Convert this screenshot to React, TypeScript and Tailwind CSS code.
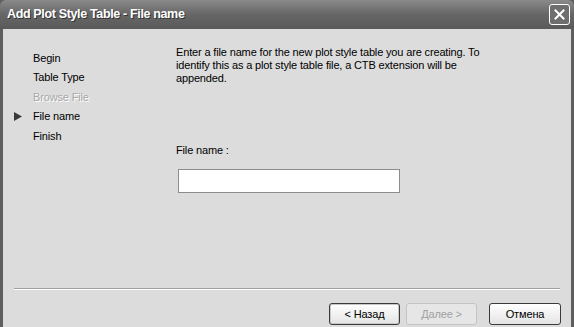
import React from "react";

export default function App() {
  const font = { fontFamily: '"Liberation Sans", Arial, sans-serif' };
  return (
    <div className="w-[574px] h-[327px] bg-[#5e5e5e] flex flex-col overflow-hidden" style={font}>
      {/* Title bar */}
      <div className="h-[29px] shrink-0 flex items-center justify-between pl-[7px] pr-[4px] bg-gradient-to-b from-[#8a8a8a] via-[#666666] to-[#5a5a5a] rounded-t-[6px]">
        <span className="text-white font-bold text-[12.5px] tracking-[-0.35px] [text-shadow:1px_1px_0_#333]">
          Add Plot Style Table - File name
        </span>
        <div className="w-[21px] h-[21px] border border-white rounded-[3px] bg-[#6e6e6e] flex items-center justify-center">
          <svg width="11" height="11" viewBox="0 0 11 11">
            <path d="M1.5 1.5 L9.5 9.5 M9.5 1.5 L1.5 9.5" stroke="white" strokeWidth="2" strokeLinecap="square" />
          </svg>
        </div>
      </div>
      {/* Body */}
      <div className="flex-1 mx-[3px] bg-[#dcdcdc] flex flex-col text-[11px] tracking-[-0.15px] text-black">
        <div className="flex-1 flex">
          {/* Sidebar */}
          <div className="w-[170px] shrink-0 pt-[19px] pl-[11px] flex flex-col">
            {[
              { t: "Begin" },
              { t: "Table Type" },
              { t: "Browse File", dis: true },
              { t: "File name", cur: true },
              { t: "Finish" },
            ].map((it) => (
              <div key={it.t} className="h-[19.5px] flex items-center">
                <div className="w-[19px] flex items-center">
                  {it.cur && (
                    <svg width="8" height="9" viewBox="0 0 8 9">
                      <path d="M0 0 L8 4.5 L0 9 Z" fill="#3a3a3a" />
                    </svg>
                  )}
                </div>
                <span className={it.dis ? "text-[#a8a8a8] [text-shadow:1px_1px_0_#fff]" : ""}>{it.t}</span>
              </div>
            ))}
          </div>
          {/* Main */}
          <div className="flex-1 pt-[17px] pl-[3px] pr-[60px]">
            <p className="leading-[13px] w-[312px]">
              Enter a file name for the new plot style table you are creating. To identify this as a plot style table file, a CTB extension will be appended.
            </p>
            <div className="mt-[57px]">File name :</div>
            <div className="mt-[10px] ml-[2px] w-[222px] h-[24px] bg-white border border-[#8c8c8c]" />
          </div>
        </div>
        {/* Separator */}
        <div className="mx-[11px] border-t border-[#a0a0a0] border-b border-b-white" />
        {/* Buttons */}
        <div className="h-[37px] flex items-start justify-end pt-[13px] pr-[10px]">
          <button className="w-[71px] h-[22px] rounded-[3px] border border-[#3a3a3a] bg-gradient-to-b from-white to-[#e4e4e4] text-[11px] shadow-[inset_0_0_0_1px_#c8c8c8]">
            &lt; Назад
          </button>
          <button className="ml-[6px] w-[71px] h-[22px] rounded-[3px] border border-[#c4c4c4] bg-[#e6e6e6] text-[#a0a0a0] text-[11px]">
            Далее &gt;
          </button>
          <button className="ml-[12px] w-[72px] h-[22px] rounded-[3px] border border-[#3a3a3a] bg-gradient-to-b from-white to-[#e4e4e4] text-[11px]">
            Отмена
          </button>
        </div>
      </div>
    </div>
  );
}
